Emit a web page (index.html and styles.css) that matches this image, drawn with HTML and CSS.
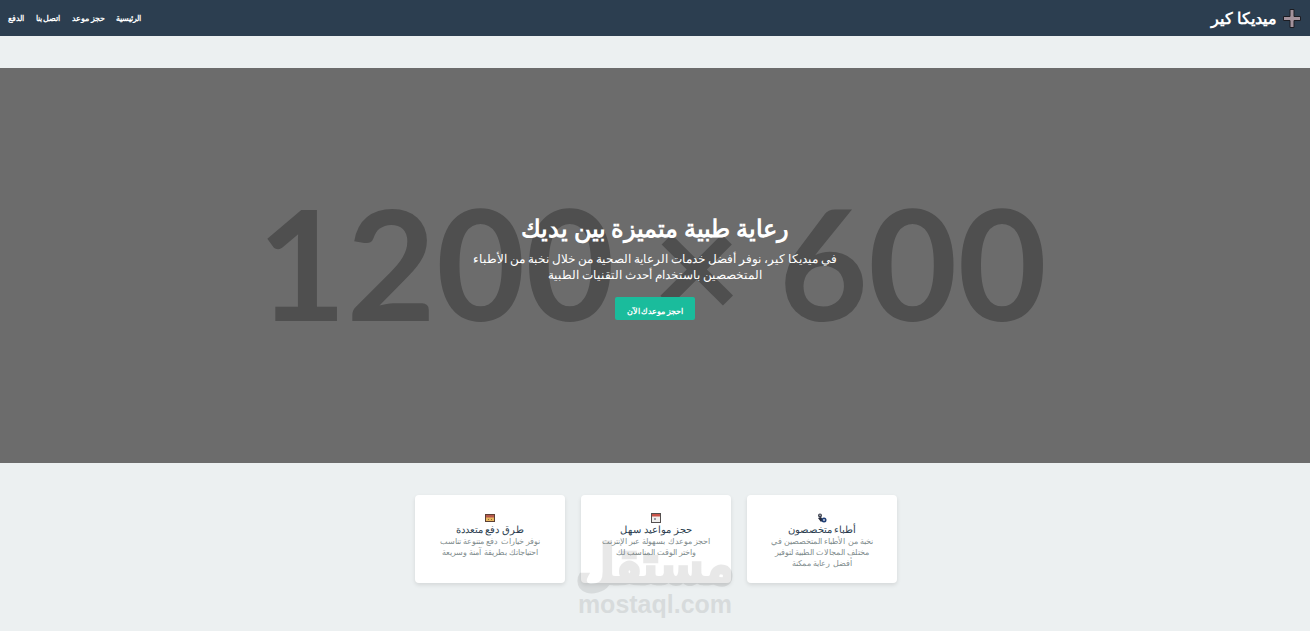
FILE: index.html
```html
<!DOCTYPE html>
<html lang="ar" dir="rtl">
<head>
<meta charset="utf-8">
<title>ميديكا كير</title>
<link rel="stylesheet" href="styles.css">
</head>
<body>
<header class="topbar">
  <div class="brand">
    <svg class="brand-icon" width="18" height="19" viewBox="0 0 18 19"><path d="M7 .5h4v7h6.500v4H11v7H7v-7H.5v-4H7z" fill="#a3929c" stroke="#1c1c22"/></svg>
    <span>ميديكا كير</span>
  </div>
  <nav class="nav">
    <a href="#">الرئيسية</a>
    <a href="#">حجز موعد</a>
    <a href="#">اتصل بنا</a>
    <a href="#">الدفع</a>
  </nav>
</header>
<main>
  <section class="hero">
    <div class="placeholder" dir="ltr">1200 × 600</div>
    <div class="hero-content">
      <h1>رعاية طبية متميزة بين يديك</h1>
      <p>في ميديكا كير، نوفر أفضل خدمات الرعاية الصحية من خلال نخبة من الأطباء المتخصصين باستخدام أحدث التقنيات الطبية</p>
      <a class="cta" href="#">احجز موعدك الآن</a>
    </div>
  </section>
  <section class="features">
    <article class="card">
      <svg class="card-icon" width="10" height="10" viewBox="0 0 10 10"><circle cx="3" cy="2.500" r="2" fill="#3a3f4d"/><path d="M1 5l3-1 2 3-2 2z" fill="#23283a"/><circle cx="7" cy="7" r="2.500" fill="#1f3f77"/><circle cx="7" cy="7" r="1" fill="#c9d0de"/><circle cx="3" cy="2.300" r=".8" fill="#c4c4c8"/></svg>
      <h3>أطباء متخصصون</h3>
      <p>نخبة من الأطباء المتخصصين في مختلف المجالات الطبية لتوفير أفضل رعاية ممكنة</p>
    </article>
    <article class="card">
      <svg class="card-icon" width="10" height="10" viewBox="0 0 10 10"><rect x=".5" y=".5" width="9" height="9" fill="#f1efed" stroke="#55504f"/><rect x="1" y="1" width="8" height="2.500" fill="#c9544a"/><rect x="3" y="5" width="2" height="2" fill="#9a9aa5"/></svg>
      <h3>حجز مواعيد سهل</h3>
      <p>احجز موعدك بسهولة عبر الإنترنت واختر الوقت المناسب لك</p>
    </article>
    <article class="card">
      <svg class="card-icon" width="10" height="10" viewBox="0 0 10 10"><rect x=".5" y="1.500" width="9" height="7" fill="#e9b860" stroke="#5c4034"/><rect x="1" y="2" width="8" height="2.500" fill="#b5574c"/><rect x="3" y="6" width="1" height="1" fill="#8a6a3a"/><rect x="6" y="6" width="1" height="1" fill="#8a6a3a"/></svg>
      <h3>طرق دفع متعددة</h3>
      <p>نوفر خيارات دفع متنوعة تناسب احتياجاتك بطريقة آمنة وسريعة</p>
    </article>
  </section>
</main>
<div class="watermark">
  <div class="wm-ar">مستقل</div>
  <div class="wm-en" dir="ltr">mostaql.com</div>
</div>
</body>
</html>
```
FILE: styles.css
```css
* { box-sizing: border-box; margin: 0; padding: 0; }
html, body { height: 631px; overflow: hidden; }
body { background: #ecf0f1; font-family: "Lato", "Noto Sans", sans-serif; color: #2c3e50; position: relative; }
.topbar { height: 36px; background: #2c3e50; display: flex; justify-content: space-between; align-items: center; padding: 0 9px 0 8px; color: #fff; }
.brand { display: flex; align-items: center; gap: 6px; font-size: 16px; font-weight: 700; }
.nav { display: flex; gap: 11.500px; }
.nav a { color: #fff; text-decoration: none; font-size: 8px; font-weight: 700; }
.hero { position: relative; margin-top: 32px; height: 395px; background: #6c6c6c; display: flex; align-items: center; justify-content: center; overflow: hidden; }
.placeholder { position: absolute; inset: 0; display: flex; align-items: center; justify-content: center; padding: 0 6px 8px 0; font-family: "Lato", sans-serif; font-weight: 700; font-size: 154px; color: #4f4f4f; }
.hero-content { position: relative; width: 400px; padding-top: 1px; text-align: center; color: #fff; }
.hero-content h1 { font-size: 24px; font-weight: 700; line-height: 32px; margin-bottom: 7px; }
.hero-content p { font-size: 12px; line-height: 16px; margin-bottom: 14px; }
.cta { display: inline-block; background: #1abc9c; color: #fff; text-decoration: none; font-size: 8px; font-weight: 700; padding: 9px 11.500px 3px; border-radius: 2px; line-height: 11px; }
.features { display: flex; justify-content: center; gap: 16px; margin-top: 32px; padding-left: 2px; }
.card { width: 150px; height: 88px; background: #fff; border-radius: 4px; box-shadow: 0 2px 4px rgba(0,0,0,.1); padding: 18px 20px 0; text-align: center; }
.card-icon { display: block; margin: 0 auto; }
.card h3 { font-size: 10px; line-height: 13px; font-weight: 400; }
.card p { font-size: 8px; line-height: 10.800px; color: #7f8c8d; }
.watermark { position: absolute; left: 575px; top: 540px; width: 160px; text-align: center; opacity: .13; color: #555; font-family: "Liberation Sans", sans-serif; font-weight: 700; pointer-events: none; }
.wm-ar { font-size: 53px; line-height: 50px; -webkit-text-stroke: 3px #555; }
.wm-en { font-size: 25px; line-height: 28px; }
```
